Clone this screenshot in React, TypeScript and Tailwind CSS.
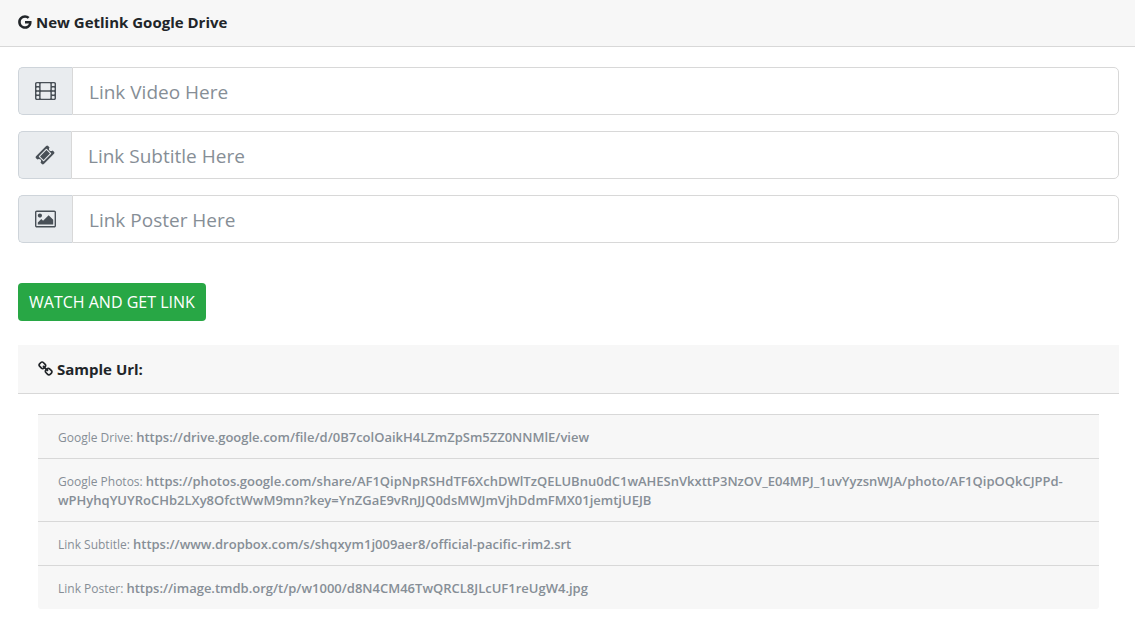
import React from 'react';

interface IconProps {
  className?: string;
}

const GoogleIcon: React.FC<IconProps> = ({ className }) => (
  <svg viewBox="128 0 1536 1792" fill="currentColor" className={className} aria-hidden="true">
    <path d="M896 786h725q12 67 12 128 0 217-91 387.5T1282.5 1568 896 1664q-157 0-299-60.5T352 1440t-164-245-61-299 61-299 164-245 245-164 299-61q300 0 515 201l-209 201Q1079 411 896 411q-129 0-238.5 65T484 652.5 420 896t64 243.5T657.5 1316 896 1381q87 0 160-24t120-60 82-82 51.5-87 22.5-78H896V786z" />
  </svg>
);

const FilmIcon: React.FC<IconProps> = ({ className }) => (
  <svg viewBox="0 0 1920 1792" fill="currentColor" fillRule="evenodd" className={className} aria-hidden="true">
    <path d="M160 64h1600q66 0 113 47t47 113v1344q0 66-47 113t-113 47H160q-66 0-113-47T0 1568V224q0-66 47-113t113-47zM192 192q-64 0-64 64v128q0 64 64 64h128q64 0 64-64V256q0-64-64-64zM192 576q-64 0-64 64v128q0 64 64 64h128q64 0 64-64V640q0-64-64-64zM192 960q-64 0-64 64v128q0 64 64 64h128q64 0 64-64v-128q0-64-64-64zM192 1344q-64 0-64 64v128q0 64 64 64h128q64 0 64-64v-128q0-64-64-64zM576 192q-64 0-64 64v512q0 64 64 64h768q64 0 64-64V256q0-64-64-64zM576 960q-64 0-64 64v512q0 64 64 64h768q64 0 64-64v-512q0-64-64-64zM1600 192q-64 0-64 64v128q0 64 64 64h128q64 0 64-64V256q0-64-64-64zM1600 576q-64 0-64 64v128q0 64 64 64h128q64 0 64-64V640q0-64-64-64zM1600 960q-64 0-64 64v128q0 64 64 64h128q64 0 64-64v-128q0-64-64-64zM1600 1344q-64 0-64 64v128q0 64 64 64h128q64 0 64-64v-128q0-64-64-64z" />
  </svg>
);

const TicketIcon: React.FC<IconProps> = ({ className }) => (
  <svg viewBox="0 0 1792 1792" fill="currentColor" className={className} aria-hidden="true">
    <path d="M1024 452l316 316-572 572-316-316zm-211 979l618-618q19-19 19-45t-19-45l-362-362q-18-18-45-18t-45 18L361 979q-19 19-19 45t19 45l362 362q18 18 45 18t45-18zm889-637l-907 908q-37 37-90.5 37t-90.5-37l-126-126q56-56 56-136t-56-136-136-56-136 56L91 1178q-37-37-37-90.5T91 997L998 91q37-37 90.5-37t90.5 37l125 125q-56 56-56 136t56 136 136 56 136-56l126 125q37 37 37 90.5t-37 90.5z" />
  </svg>
);

const ImageIcon: React.FC<IconProps> = ({ className }) => (
  <svg viewBox="0 0 1920 1792" fill="currentColor" className={className} aria-hidden="true">
    <path d="M640 576q0 80-56 136t-136 56-136-56-56-136 56-136 136-56 136 56 56 136zm1024 384v448H256v-192l320-320 160 160 512-512zm96-704H160q-13 0-22.5 9.5T128 288v1216q0 13 9.5 22.5t22.5 9.5h1600q13 0 22.5-9.5t9.5-22.5V288q0-13-9.5-22.5T1760 256zm160 32v1216q0 66-47 113t-113 47H160q-66 0-113-47T0 1504V288q0-66 47-113t113-47h1600q66 0 113 47t47 113z" />
  </svg>
);

const ChainIcon: React.FC<IconProps> = ({ className }) => (
  <svg viewBox="0 0 1664 1792" fill="currentColor" className={className} aria-hidden="true">
    <path d="M1456 1216q0-40-28-68l-208-208q-28-28-68-28-42 0-72 32 3 3 19 18.5t21.5 21.5 15 19 13 25.5 3.5 27.5q0 40-28 68t-68 28q-15 0-27.5-3.5t-25.5-13-19-15-21.5-21.5-18.5-19q-33 31-33 73 0 40 28 68l206 207q27 27 68 27 40 0 68-26l147-146q28-28 28-67zM753 511q0-40-28-68L519 236q-28-28-68-28-39 0-68 27L236 381q-28 28-28 67 0 40 28 68l208 208q27 27 68 27 42 0 72-31-3-3-19-18.5t-21.5-21.5-15-19-13-25.5T512 608q0-40 28-68t68-28q15 0 27.5 3.5t25.5 13 19 15 21.5 21.5 18.5 19q33-31 33-73zm895 705q0 120-85 203l-147 146q-83 83-203 83-121 0-204-85l-206-207q-83-83-83-203 0-123 88-209l-88-88q-86 88-208 88-120 0-204-84L100 652q-84-84-84-204t85-203L248 99q83-83 203-83 121 0 204 85l206 207q83 83 83 203 0 123-88 209l88 88q86-88 208-88 120 0 204 84l208 208q84 84 84 204z" />
  </svg>
);

const fields = [
  { id: 'video', label: 'Link Video Here', icon: <FilmIcon className="h-5 w-[21px]" /> },
  { id: 'subtitle', label: 'Link Subtitle Here', icon: <TicketIcon className="h-5 w-5" /> },
  { id: 'poster', label: 'Link Poster Here', icon: <ImageIcon className="h-5 w-[21px]" /> },
];

const samples = [
  { name: 'Google Drive:', url: 'https://drive.google.com/file/d/0B7colOaikH4LZmZpSm5ZZ0NNMlE/view' },
  {
    name: 'Google Photos:',
    url: 'https://photos.google.com/share/AF1QipNpRSHdTF6XchDWlTzQELUBnu0dC1wAHESnVkxttP3NzOV_E04MPJ_1uvYyzsnWJA/photo/AF1QipOQkCJPPd-wPHyhqYUYRoCHb2LXy8OfctWwM9mn?key=YnZGaE9vRnJJQ0dsMWJmVjhDdmFMX01jemtjUEJB',
  },
  { name: 'Link Subtitle:', url: 'https://www.dropbox.com/s/shqxym1j009aer8/official-pacific-rim2.srt' },
  { name: 'Link Poster:', url: 'https://image.tmdb.org/t/p/w1000/d8N4CM46TwQRCL8JLcUF1reUgW4.jpg' },
];

const App: React.FC = () => {
  return (
    <div className="min-h-screen bg-white font-['Open_Sans','Noto_Sans',sans-serif] text-[#212529]">
      <header className="flex items-center gap-1 border-b border-[#d8d8d8] bg-[#f7f7f7] pt-[10px] pb-3 pl-[18px] pr-4">
        <GoogleIcon className="h-4 w-[14px]" />
        <h1 className="text-[15px] leading-6 font-bold">New Getlink Google Drive</h1>
      </header>

      <main className="pt-5 pb-8 pl-[18px] pr-4">
        <form onSubmit={e => e.preventDefault()}>
          <div className="flex flex-col gap-4">
            {fields.map(field => (
              <div key={field.id} className="flex h-12">
                <label
                  htmlFor={field.id}
                  aria-label={field.label}
                  className="flex items-center rounded-l-[5px] border border-r-0 border-[#ced4da] bg-[#e9ecef] px-4 text-[#495057]"
                >
                  {field.icon}
                </label>
                <input
                  id={field.id}
                  type="text"
                  placeholder={field.label}
                  className="min-w-0 flex-1 rounded-r-[5px] border border-[#d8d8d8] bg-white px-4 pt-[2px] text-[19px] text-[#495057] outline-none placeholder:text-[#868e96] focus:border-[#80bdff]"
                />
              </div>
            ))}
          </div>
          <button
            type="submit"
            className="mt-10 rounded bg-[#28a745] px-[11px] py-[7px] text-base leading-6 text-white hover:bg-[#218838]"
          >
            WATCH AND GET LINK
          </button>
        </form>

        <section className="mt-6">
          <div className="flex items-center gap-1 border-b border-[#d8d8d8] bg-[#f7f7f7] px-5 py-3">
            <ChainIcon className="h-4 w-[15px]" />
            <h2 className="text-[15px] leading-6 font-bold">Sample Url:</h2>
          </div>
          <ul className="mx-5 mt-5 overflow-hidden rounded-b-[3px] bg-[#f7f7f7] text-xs leading-[19px] text-[#868e96]">
            {samples.map(sample => (
              <li key={sample.name} className="border-t border-[#d8d8d8] px-5 pt-[13px] pb-[11px]">
                {sample.name} <strong className="text-[13px] leading-none font-semibold">{sample.url}</strong>
              </li>
            ))}
          </ul>
        </section>
      </main>
    </div>
  );
};

export default App;
